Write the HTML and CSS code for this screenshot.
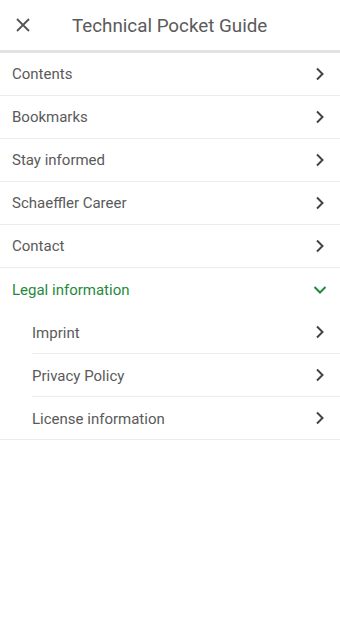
FILE: index.html
```html
<!DOCTYPE html>
<html>
<head>
<meta charset="utf-8">
<link rel="stylesheet" href="styles.css">
</head>
<body>
<header class="header">
  <svg class="close" width="14" height="14" viewBox="0 0 14 14"><path d="M1 1L13 13M13 1L1 13" stroke="#555" stroke-width="1.8" fill="none"/></svg>
  <span class="title">Technical Pocket Guide</span>
</header>
<ul class="menu">
  <li class="row"><span>Contents</span><svg class="chev" width="10" height="14" viewBox="0 0 10 14"><path d="M2 1.5L7.5 7L2 12.5" stroke="#444" stroke-width="2" fill="none"/></svg></li>
  <li class="row"><span>Bookmarks</span><svg class="chev" width="10" height="14" viewBox="0 0 10 14"><path d="M2 1.5L7.5 7L2 12.5" stroke="#444" stroke-width="2" fill="none"/></svg></li>
  <li class="row"><span>Stay informed</span><svg class="chev" width="10" height="14" viewBox="0 0 10 14"><path d="M2 1.5L7.5 7L2 12.5" stroke="#444" stroke-width="2" fill="none"/></svg></li>
  <li class="row"><span>Schaeffler Career</span><svg class="chev" width="10" height="14" viewBox="0 0 10 14"><path d="M2 1.5L7.5 7L2 12.5" stroke="#444" stroke-width="2" fill="none"/></svg></li>
  <li class="row"><span>Contact</span><svg class="chev" width="10" height="14" viewBox="0 0 10 14"><path d="M2 1.5L7.5 7L2 12.5" stroke="#444" stroke-width="2" fill="none"/></svg></li>
  <li class="row open"><span>Legal information</span><svg class="chev-down" width="14" height="10" viewBox="0 0 14 10"><path d="M1.5 2L7 7.5L12.5 2" stroke="#1f8a3c" stroke-width="2" fill="none"/></svg></li>
  <li class="group">
    <ul class="sub">
      <li class="row subrow"><span>Imprint</span><svg class="chev" width="10" height="14" viewBox="0 0 10 14"><path d="M2 1.5L7.5 7L2 12.5" stroke="#444" stroke-width="2" fill="none"/></svg></li>
      <li class="row subrow"><span>Privacy Policy</span><svg class="chev" width="10" height="14" viewBox="0 0 10 14"><path d="M2 1.5L7.5 7L2 12.5" stroke="#444" stroke-width="2" fill="none"/></svg></li>
      <li class="row subrow last"><span>License information</span><svg class="chev" width="10" height="14" viewBox="0 0 10 14"><path d="M2 1.5L7.5 7L2 12.5" stroke="#444" stroke-width="2" fill="none"/></svg></li>
    </ul>
  </li>
</ul>
</body>
</html>
```
FILE: styles.css
```css
html, body {
  margin: 0;
  padding: 0;
  background: #fff;
  font-family: Roboto, "Noto Sans", sans-serif;
}
.header {
  height: 50px;
  display: flex;
  align-items: center;
  border-bottom: 3px solid #e3e3e3;
  box-sizing: content-box;
}
.close {
  margin-left: 16px;
  margin-right: 42px;
  margin-top: 0;
}
.title {
  font-size: 18.8px;
  color: #5a5a5a;
  margin-top: 1px;
}
.menu, .sub {
  list-style: none;
  margin: 0;
  padding: 0;
}
.row {
  height: 42px;
  display: flex;
  align-items: center;
  justify-content: space-between;
  padding: 0 15px 0 12px;
  border-bottom: 1px solid #ececec;
  font-size: 15px;
  color: #5a5a5a;
}
.row.open {
  color: #1f8a3c;
  border-bottom: none;
  height: 43px;
  padding-right: 13px;
}
.sub {
  padding-left: 32px;
}
.subrow {
  padding-left: 0;
}
.subrow span {
  margin-top: 2px;
}
.group {
  border-bottom: 1px solid #ececec;
}
.subrow.last {
  border-bottom: none;
}
```
